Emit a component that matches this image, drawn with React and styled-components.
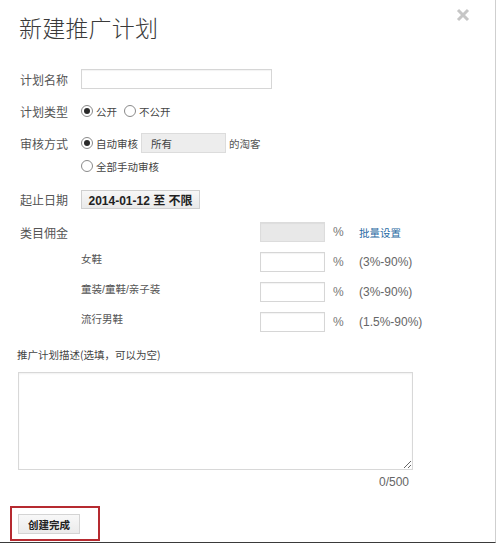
import React from "react";
import styled, { createGlobalStyle } from "styled-components";

const Global = createGlobalStyle`
  html, body { margin: 0; padding: 0; background: #fff; }
  body { font-family: "Liberation Sans", "Noto Sans CJK SC", sans-serif; font-size: 12px; color: #555; }
  * { box-sizing: border-box; }
`;

const Dialog = styled.div`
  position: relative;
  width: 496px;
  height: 543px;
  border-right: 1px solid #cfcfcf;
  border-bottom: 1px solid #3a3a3a;
  padding: 12px 0 0 0;
  display: flex;
  flex-direction: column;
`;

const Close = styled.button`
  position: absolute;
  top: 8px;
  left: 456px;
  width: 14px;
  height: 14px;
  padding: 0;
  border: 0;
  background: none;
  cursor: pointer;
  display: flex;
`;

const Title = styled.h1`
  margin: 0 0 0 19px;
  height: 30px;
  line-height: 30px;
  font-family: "Noto Sans CJK SC", sans-serif;
  font-weight: 300;
  font-size: 23px;
  letter-spacing: 0.2px;
  color: #3a3a3a;
`;

const Row = styled.div`
  display: flex;
  align-items: center;
  height: ${(p) => p.$h || 20}px;
  margin-top: ${(p) => p.$mt || 0}px;
  padding-left: ${(p) => p.$pl ?? 20}px;
`;

const Label = styled.span`
  width: ${(p) => p.$w || 61}px;
  flex: none;
  font-family: "Noto Sans CJK SC", sans-serif;
  font-size: 12px;
  color: #555;
`;

const SubLabel = styled.span`
  width: 179px;
  flex: none;
  align-self: flex-start;
  line-height: 14px;
  font-family: "Liberation Sans", "Noto Sans CJK SC", sans-serif;
  font-size: 10.5px;
  color: #555;
`;

const TextInput = styled.input`
  width: ${(p) => p.$w}px;
  height: ${(p) => p.$h || 20}px;
  border: 1px solid ${(p) => (p.$disabled ? "#dcdcdc" : "#d6d6d6")};
  background: ${(p) => (p.$disabled ? "#e8e8e8" : "#fff")};
  box-shadow: inset 0 1px 1px rgba(0,0,0,0.05);
  padding: 0 4px;
  font-size: 12px;
  outline: none;
  flex: none;
`;

const RadioItem = styled.label`
  display: inline-flex;
  align-items: center;
  margin-right: ${(p) => p.$mr || 0}px;
  font-family: "Noto Sans CJK SC", sans-serif;
  font-size: 10.5px;
  color: #444;
`;

const RadioDot = styled.span`
  width: 12px;
  height: 12px;
  border-radius: 50%;
  border: 1px solid #8a8a8a;
  background: #fff;
  margin-right: 3px;
  display: inline-flex;
  align-items: center;
  justify-content: center;
  &::after {
    content: "";
    width: 6px;
    height: 6px;
    border-radius: 50%;
    background: ${(p) => (p.$on ? "#2a2a2a" : "transparent")};
  }
`;

const Select = styled.div`
  width: 85px;
  height: 20px;
  margin: 0 3px 0 3px;
  background: #ededed;
  border: 1px solid #dcdcdc;
  padding-left: 9px;
  display: flex;
  align-items: center;
  font-family: "Noto Sans CJK SC", sans-serif;
  font-size: 10.5px;
  color: #444;
`;

const Plain = styled.span`
  font-family: "Noto Sans CJK SC", sans-serif;
  font-size: 10.5px;
  color: #555;
`;

const DateButton = styled.button`
  height: 19px;
  width: 119px;
  padding: 0;
  border: 1px solid #cfcfcf;
  background: linear-gradient(#f7f7f7, #e9e9e9);
  font-family: "Liberation Sans", "Noto Sans CJK SC", sans-serif;
  font-weight: 700;
  font-size: 12px;
  color: #222;
  display: flex;
  align-items: center;
  justify-content: center;
`;

const Unit = styled.span`
  width: 26px;
  margin-left: 8px;
  font-size: 12px;
  color: #777;
  flex: none;
`;

const Note = styled.span`
  font-size: 12px;
  color: #666;
`;

const Link = styled.a`
  font-family: "Noto Sans CJK SC", sans-serif;
  font-size: 10.5px;
  color: #1f6aa3;
  text-decoration: none;
`;

const DescLabel = styled.div`
  margin: 15px 0 0 17px;
  height: 16px;
  line-height: 16px;
  font-family: "Noto Sans CJK SC", sans-serif;
  font-size: 10.5px;
  color: #444;
`;

const TextArea = styled.textarea`
  display: block;
  margin: 9px 0 0 18px;
  width: 395px;
  height: 98px;
  border: 1px solid #d8d8d8;
  box-shadow: inset 0 1px 2px rgba(0,0,0,0.06);
  resize: both;
  outline: none;
  font-size: 12px;
`;

const Counter = styled.div`
  width: 412px;
  margin-top: 4px;
  height: 16px;
  line-height: 16px;
  text-align: right;
  padding-right: 3px;
  font-size: 12px;
  color: #666;
`;

const Highlight = styled.div`
  align-self: flex-start;
  margin: 16px 0 0 10px;
  border: 2px solid #b62a30;
  padding: 6px 18px 5px 6px;
`;

const SubmitButton = styled.button`
  width: 62px;
  height: 20px;
  padding: 0;
  border: 1px solid #d4d4d4;
  background: linear-gradient(#f8f8f8, #ebebeb);
  font-family: "Noto Sans CJK SC", sans-serif;
  font-weight: 700;
  font-size: 10.5px;
  color: #222;
  display: flex;
  align-items: center;
  justify-content: center;
`;

const CrossIcon = () => (
  <svg width="14" height="14" viewBox="0 0 14 14">
    <path d="M2 2 L12 12 M12 2 L2 12" stroke="#c6c6c6" strokeWidth="3" strokeLinecap="butt" />
  </svg>
);

const Radio = ({ on, children, mr }) => (
  <RadioItem $mr={mr}>
    <RadioDot $on={on} />
    {children}
  </RadioItem>
);

const categories = [
  { name: "女鞋", range: "(3%-90%)" },
  { name: "童装/童鞋/亲子装", range: "(3%-90%)" },
  { name: "流行男鞋", range: "(1.5%-90%)" },
];

export default function App() {
  return (
    <>
      <Global />
      <Dialog>
        <Close aria-label="关闭"><CrossIcon /></Close>
        <Title>新建推广计划</Title>

        <Row $mt={27}>
          <Label>计划名称</Label>
          <TextInput $w={191} />
        </Row>

        <Row $mt={12}>
          <Label>计划类型</Label>
          <Radio on mr={7}>公开</Radio>
          <Radio>不公开</Radio>
        </Row>

        <Row $mt={12}>
          <Label>审核方式</Label>
          <Radio on>自动审核</Radio>
          <Select>所有</Select>
          <Plain>的淘客</Plain>
        </Row>
        <Row $mt={3} $pl={81}>
          <Radio>全部手动审核</Radio>
        </Row>

        <Row $mt={13}>
          <Label>起止日期</Label>
          <DateButton>2014-01-12 至 不限</DateButton>
        </Row>

        <Row $mt={13}>
          <Label $w={240}>类目佣金</Label>
          <TextInput $w={65} $disabled readOnly />
          <Unit>%</Unit>
          <Link href="#">批量设置</Link>
        </Row>

        {categories.map((c) => (
          <Row key={c.name} $mt={10} $pl={81}>
            <SubLabel>{c.name}</SubLabel>
            <TextInput $w={65} />
            <Unit>%</Unit>
            <Note>{c.range}</Note>
          </Row>
        ))}

        <DescLabel>推广计划描述(选填，可以为空)</DescLabel>
        <TextArea />
        <Counter>0/500</Counter>

        <Highlight>
          <SubmitButton>创建完成</SubmitButton>
        </Highlight>
      </Dialog>
    </>
  );
}
